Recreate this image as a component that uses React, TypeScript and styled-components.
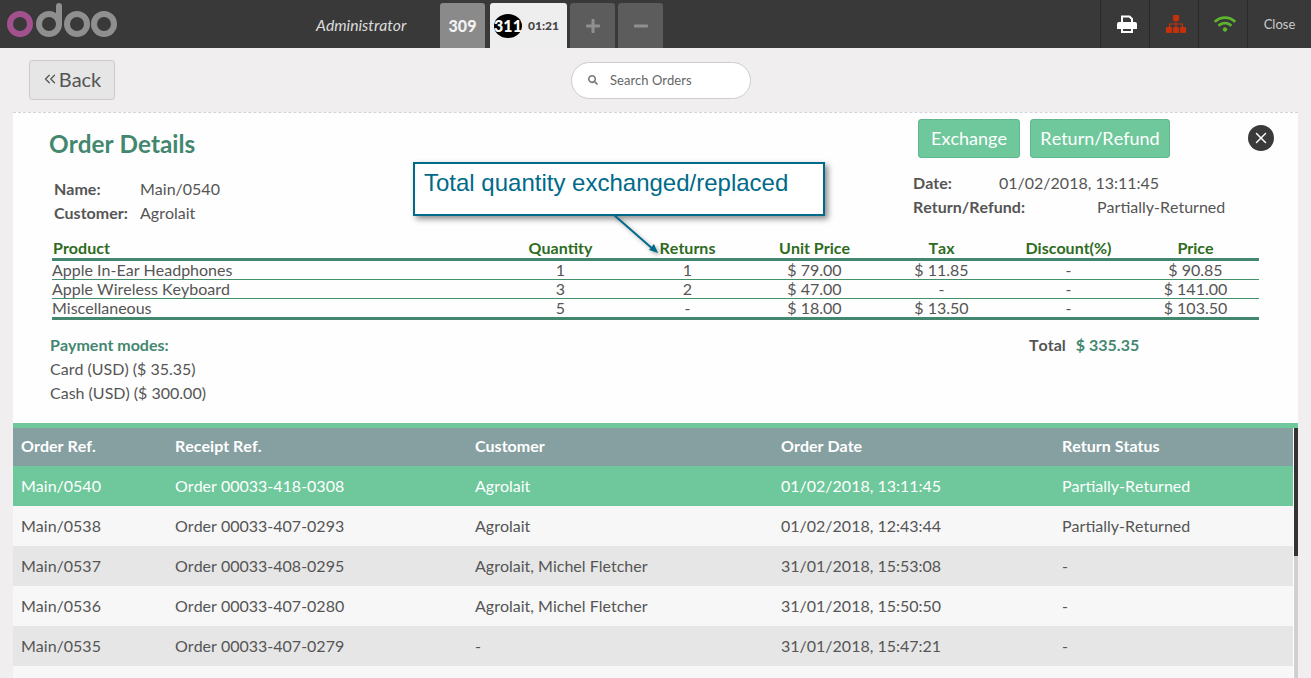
import React from 'react'
import styled, { createGlobalStyle } from 'styled-components'
import { FaWifi, FaSearch, FaPlus, FaMinus } from 'react-icons/fa'
import { ChevronsLeft, X } from 'lucide-react'

const GlobalStyle = createGlobalStyle`
  html, body {
    margin: 0;
    height: 100%;
    overflow: hidden;
    background: #f0eeee;
    font-family: Lato, "Open Sans", sans-serif;
    font-kerning: none;
    color: #555555;
  }
  * { box-sizing: border-box; }
`

const Header = styled.header`
  height: 48px;
  background: #393939;
  display: flex;
  align-items: flex-end;
`

const Logo = styled.svg`
  width: 120px;
  height: 48px;
  margin-right: 196px;
  flex: none;
`

const Cashier = styled.div`
  width: 124px;
  height: 48px;
  line-height: 50px;
  font-size: 15.7px;
  font-style: italic;
  color: #dddddd;
  flex: none;
`

const Tabs = styled.div`
  display: flex;
  gap: 3px;
  flex: 1;
`

const Tab = styled.div<{ $width: number; $bg: string; $color: string }>`
  width: ${({ $width }) => $width}px;
  height: 45px;
  border-radius: 3px 3px 0 0;
  background: ${({ $bg }) => $bg};
  color: ${({ $color }) => $color};
  display: flex;
  align-items: center;
  justify-content: center;
  font-weight: 900;
  font-size: 16px;
`

const ActiveTab = styled(Tab)`
  justify-content: flex-start;
  gap: 6px;
  margin-left: 2px;
  padding-left: 4px;
`

const OrderBadge = styled.span`
  width: 28px;
  height: 24px;
  border-radius: 50%;
  background: #000000;
  color: #ffffff;
  display: flex;
  align-items: center;
  justify-content: center;
  font-size: 16px;
`

const Clock = styled.span`
  font-size: 12px;
  font-weight: 900;
  color: #444444;
`

const StatusButton = styled.div<{ $color: string }>`
  width: 49px;
  height: 48px;
  padding-left: 4px;
  border-left: 1px solid #292929;
  display: flex;
  align-items: center;
  justify-content: center;
  color: ${({ $color }) => $color};
`

const CloseButton = styled.div`
  width: 64px;
  height: 48px;
  border-left: 1px solid #292929;
  display: flex;
  align-items: center;
  justify-content: center;
  color: #cccccc;
  font-size: 13px;
`

const SubBar = styled.div`
  height: 64px;
  padding: 12px 29px 0;
  display: grid;
  grid-template-columns: 542px 180px;
`

const BackButton = styled.div`
  width: 86px;
  height: 40px;
  background: #e6e6e6;
  border: 1px solid #cbcbcb;
  border-radius: 3px;
  display: flex;
  align-items: center;
  justify-content: center;
  gap: 0;
  padding: 0 2px 2px 0;
  font-size: 20px;
  color: #555555;
`

const SearchBox = styled.div`
  width: 180px;
  height: 37px;
  margin-top: 2px;
  padding: 0 0 2px 16px;
  background: #ffffff;
  border: 1px solid #cccccc;
  border-radius: 19px;
  display: flex;
  align-items: center;
  gap: 12px;
  font-size: 13px;
  color: #666666;
`

const Panel = styled.section`
  position: relative;
  margin: 0 13px;
  background: #fefefe;
  border-top: 1px dashed #d4d4d4;
  height: 311px;
`

const TopRow = styled.div`
  display: flex;
  justify-content: space-between;
  padding: 6px 128px 0 36px;
`

const Title = styled.h2`
  margin: 10px 0 0;
  font-size: 24.3px;
  line-height: 30px;
  font-weight: 700;
  color: #43876f;
`

const Actions = styled.div`
  display: flex;
  gap: 10px;
`

const ActionButton = styled.div<{ $width: number }>`
  width: ${({ $width }) => $width}px;
  height: 39px;
  padding-bottom: 2px;
  background: #6ec89b;
  border: 1px solid #5fb98c;
  border-radius: 3px;
  display: flex;
  align-items: center;
  justify-content: center;
  color: #ffffff;
  font-size: 18px;
`

const Dismiss = styled.div`
  position: absolute;
  top: 12px;
  right: 24px;
  width: 26px;
  height: 26px;
  border-radius: 50%;
  background: #3a3a3a;
  color: #ffffff;
  display: flex;
  align-items: center;
  justify-content: center;
`

const InfoRow = styled.div`
  display: flex;
  justify-content: space-between;
  padding: 0 71px 0 41px;
  height: 75px;
`

const InfoBlock = styled.div<{ $top: number; $width: number }>`
  width: ${({ $width }) => $width}px;
  padding-top: ${({ $top }) => $top}px;
`

const InfoLine = styled.div`
  display: flex;
  height: 24px;
  line-height: 24px;
  font-size: 16px;
`

const InfoLabel = styled.span<{ $width: number }>`
  width: ${({ $width }) => $width}px;
  font-weight: 700;
  flex: none;
`

const LinesTable = styled.table`
  width: 1207px;
  margin: 5px 0 0 39px;
  border-collapse: collapse;
  table-layout: fixed;
  font-size: 16px;
  line-height: 18px;

  th {
    height: 20px;
    font-size: 16px;
    line-height: 17px;
    font-weight: 700;
    color: #2e6b1f;
    padding: 0;
    vertical-align: top;
    text-align: center;
  }
  th:first-child { width: 445px; text-align: left; padding-left: 1px; }
  td {
    height: 19px;
    padding: 0;
    text-align: center;
    border-bottom: 1px solid #43916b;
  }
  td:first-child { text-align: left; }
  thead tr { border-bottom: 3px solid #43876f; }
  tbody tr:last-child td { border-bottom: 3px solid #43876f; height: 20px; }
`

const Footer = styled.div`
  display: flex;
  padding: 13px 0 0 37px;
`

const Payments = styled.div`
  width: 979px;
  font-size: 16px;
  line-height: 24px;
`

const PaymentsTitle = styled.div`
  font-weight: 700;
  color: #43876f;
`

const TotalBlock = styled.div`
  display: flex;
  gap: 10px;
  height: 24px;
  font-size: 16px;
  line-height: 24px;
  font-weight: 700;
`

const TotalValue = styled.span`
  color: #43876f;
`

const Callout = styled.div`
  position: absolute;
  left: 400px;
  top: 49px;
  width: 412px;
  height: 54px;
  background: #ffffff;
  border: 2px solid #006a8a;
  box-shadow: 3px 3px 6px rgba(0, 0, 0, 0.45);
  padding: 4px 9px;
  font-family: "Liberation Sans", Arial, sans-serif;
  font-kerning: normal;
  font-size: 24px;
  line-height: 30px;
  color: #006a8a;
`

const CalloutArrow = styled.svg`
  position: absolute;
  left: 595px;
  top: 100px;
  width: 60px;
  height: 50px;
  overflow: visible;
  filter: drop-shadow(2px 2px 2px rgba(0, 0, 0, 0.35));
`

const ListWrap = styled.div`
  position: relative;
  margin: 0 13px;
  border-top: 5px solid #6ec89b;
  height: 255px;
  overflow: hidden;
`

const Scrollbar = styled.div`
  position: absolute;
  top: 0;
  right: 0;
  width: 5px;
  height: 100%;
  background: #d0d0d0;
  border-left: 1px solid #ffffff;

  &::before {
    content: '';
    display: block;
    height: 128px;
    background: #333333;
  }
`

const ListRow = styled.div<{ $bg: string; $color: string; $height: number }>`
  display: grid;
  grid-template-columns: 154px 300px 306px 281px 1fr;
  align-items: center;
  width: 1280px;
  height: ${({ $height }) => $height}px;
  padding: 0 0 2px 8px;
  background: ${({ $bg }) => $bg};
  color: ${({ $color }) => $color};
  font-size: 16px;
`

const ListHead = styled(ListRow)`
  padding-bottom: 4px;
  font-weight: 700;
`

const orderRows = [
  ['Main/0540', 'Order 00033-418-0308', 'Agrolait', '01/02/2018, 13:11:45', 'Partially-Returned'],
  ['Main/0538', 'Order 00033-407-0293', 'Agrolait', '01/02/2018, 12:43:44', 'Partially-Returned'],
  ['Main/0537', 'Order 00033-408-0295', 'Agrolait, Michel Fletcher', '31/01/2018, 15:53:08', '-'],
  ['Main/0536', 'Order 00033-407-0280', 'Agrolait, Michel Fletcher', '31/01/2018, 15:50:50', '-'],
  ['Main/0535', 'Order 00033-407-0279', '-', '31/01/2018, 15:47:21', '-'],
]

const lineItems = [
  ['Apple In-Ear Headphones', '1', '1', '$ 79.00', '$ 11.85', '-', '$ 90.85'],
  ['Apple Wireless Keyboard', '3', '2', '$ 47.00', '-', '-', '$ 141.00'],
  ['Miscellaneous', '5', '-', '$ 18.00', '$ 13.50', '-', '$ 103.50'],
]

const rowBg = (i: number) => (i === 0 ? '#6ec89b' : i % 2 === 1 ? '#f7f7f7' : '#e6e6e6')

const PrinterIcon = () => (
  <svg width="20" height="18" viewBox="0 0 20 18">
    <path d="M5 7V1.5h7.5L15 4v3" fill="none" stroke="#fff" strokeWidth="2" />
    <path
      d="M2 7h16a2 2 0 0 1 2 2v5h-4v-2H4v2H0V9a2 2 0 0 1 2-2z"
      fill="#fff"
    />
    <path d="M5 13h10v4H5z" fill="none" stroke="#fff" strokeWidth="2" />
  </svg>
)

const SitemapIcon = () => (
  <svg width="20" height="18" viewBox="0 0 20 18" fill="#c8300c">
    <rect x="7" y="0" width="6" height="6" rx="1" />
    <rect x="0" y="12" width="6" height="6" rx="1" />
    <rect x="7" y="12" width="6" height="6" rx="1" />
    <rect x="14" y="12" width="6" height="6" rx="1" />
    <path d="M9.4 6h1.2v2.4H17V12h-1.2V9.6h-5.2V12H9.4V9.6H4.2V12H3V8.4h6.4z" />
  </svg>
)

const App: React.FC = () => {
  return (
    <>
      <GlobalStyle />
      <Header>
        <Logo viewBox="0 0 120 48">
          <g fill="none" strokeWidth="6">
            <circle cx="20" cy="24" r="10" stroke="#a3508f" />
            <circle cx="49" cy="24" r="10" stroke="#8f8f8f" />
            <path d="M59 24V6" stroke="#8f8f8f" strokeLinecap="round" />
            <circle cx="77" cy="24" r="10" stroke="#8f8f8f" />
            <circle cx="104" cy="24" r="10" stroke="#8f8f8f" />
          </g>
        </Logo>
        <Cashier>Administrator</Cashier>
        <Tabs>
          <Tab $width={45} $bg="#8a8a8a" $color="#f2f2f2">309</Tab>
          <ActiveTab $width={77} $bg="#efeeee" $color="#444444">
            <OrderBadge>311</OrderBadge>
            <Clock>01:21</Clock>
          </ActiveTab>
          <Tab $width={45} $bg="#5c5c5c" $color="#8f8f8f"><FaPlus size={16} /></Tab>
          <Tab $width={45} $bg="#5c5c5c" $color="#8f8f8f"><FaMinus size={16} /></Tab>
        </Tabs>
        <StatusButton $color="#ffffff"><PrinterIcon /></StatusButton>
        <StatusButton $color="#c8300c"><SitemapIcon /></StatusButton>
        <StatusButton $color="#5eb52e"><FaWifi size={22} /></StatusButton>
        <CloseButton>Close</CloseButton>
      </Header>
      <SubBar>
        <BackButton><ChevronsLeft size={18} strokeWidth={1.75} />Back</BackButton>
        <SearchBox>
          <FaSearch size={10} color="#777777" />
          Search Orders
        </SearchBox>
      </SubBar>
      <Panel>
        <TopRow>
          <Title>Order Details</Title>
          <Actions>
            <ActionButton $width={102}>Exchange</ActionButton>
            <ActionButton $width={140}>Return/Refund</ActionButton>
          </Actions>
        </TopRow>
        <Dismiss><X size={18} strokeWidth={2} /></Dismiss>
        <InfoRow>
          <InfoBlock $top={18} $width={300}>
            <InfoLine><InfoLabel $width={86}>Name:</InfoLabel>Main/0540</InfoLine>
            <InfoLine><InfoLabel $width={86}>Customer:</InfoLabel>Agrolait</InfoLine>
          </InfoBlock>
          <InfoBlock $top={12} $width={314}>
            <InfoLine><InfoLabel $width={86}>Date:</InfoLabel>01/02/2018, 13:11:45</InfoLine>
            <InfoLine><InfoLabel $width={184}>Return/Refund:</InfoLabel>Partially-Returned</InfoLine>
          </InfoBlock>
        </InfoRow>
        <LinesTable>
          <thead>
            <tr>
              <th>Product</th>
              <th>Quantity</th>
              <th>Returns</th>
              <th>Unit Price</th>
              <th>Tax</th>
              <th>Discount(%)</th>
              <th>Price</th>
            </tr>
          </thead>
          <tbody>
            {lineItems.map((line) => (
              <tr key={line[0]}>
                {line.map((cell, i) => (
                  <td key={i}>{cell}</td>
                ))}
              </tr>
            ))}
          </tbody>
        </LinesTable>
        <Footer>
          <Payments>
            <PaymentsTitle>Payment modes:</PaymentsTitle>
            <div>Card (USD) ($ 35.35)</div>
            <div>Cash (USD) ($ 300.00)</div>
          </Payments>
          <TotalBlock>
            Total <TotalValue>$ 335.35</TotalValue>
          </TotalBlock>
        </Footer>
        <Callout>Total quantity exchanged/replaced</Callout>
        <CalloutArrow viewBox="0 0 60 50">
          <path d="M6 2L46 37" stroke="#006a8a" strokeWidth="2" fill="none" />
          <path d="M50 40L41 37L46 31Z" fill="#006a8a" />
        </CalloutArrow>
      </Panel>
      <ListWrap>
        <ListHead $bg="#869fa1" $color="#ffffff" $height={38}>
          <span>Order Ref.</span>
          <span>Receipt Ref.</span>
          <span>Customer</span>
          <span>Order Date</span>
          <span>Return Status</span>
        </ListHead>
        {orderRows.map((row, i) => (
          <ListRow key={row[0]} $bg={rowBg(i)} $color={i === 0 ? '#ffffff' : '#555555'} $height={40}>
            {row.map((cell, j) => (
              <span key={j}>{cell}</span>
            ))}
          </ListRow>
        ))}
        <ListRow $bg="#f7f7f7" $color="#555555" $height={40} />
        <Scrollbar />
      </ListWrap>
    </>
  )
}

export default App
